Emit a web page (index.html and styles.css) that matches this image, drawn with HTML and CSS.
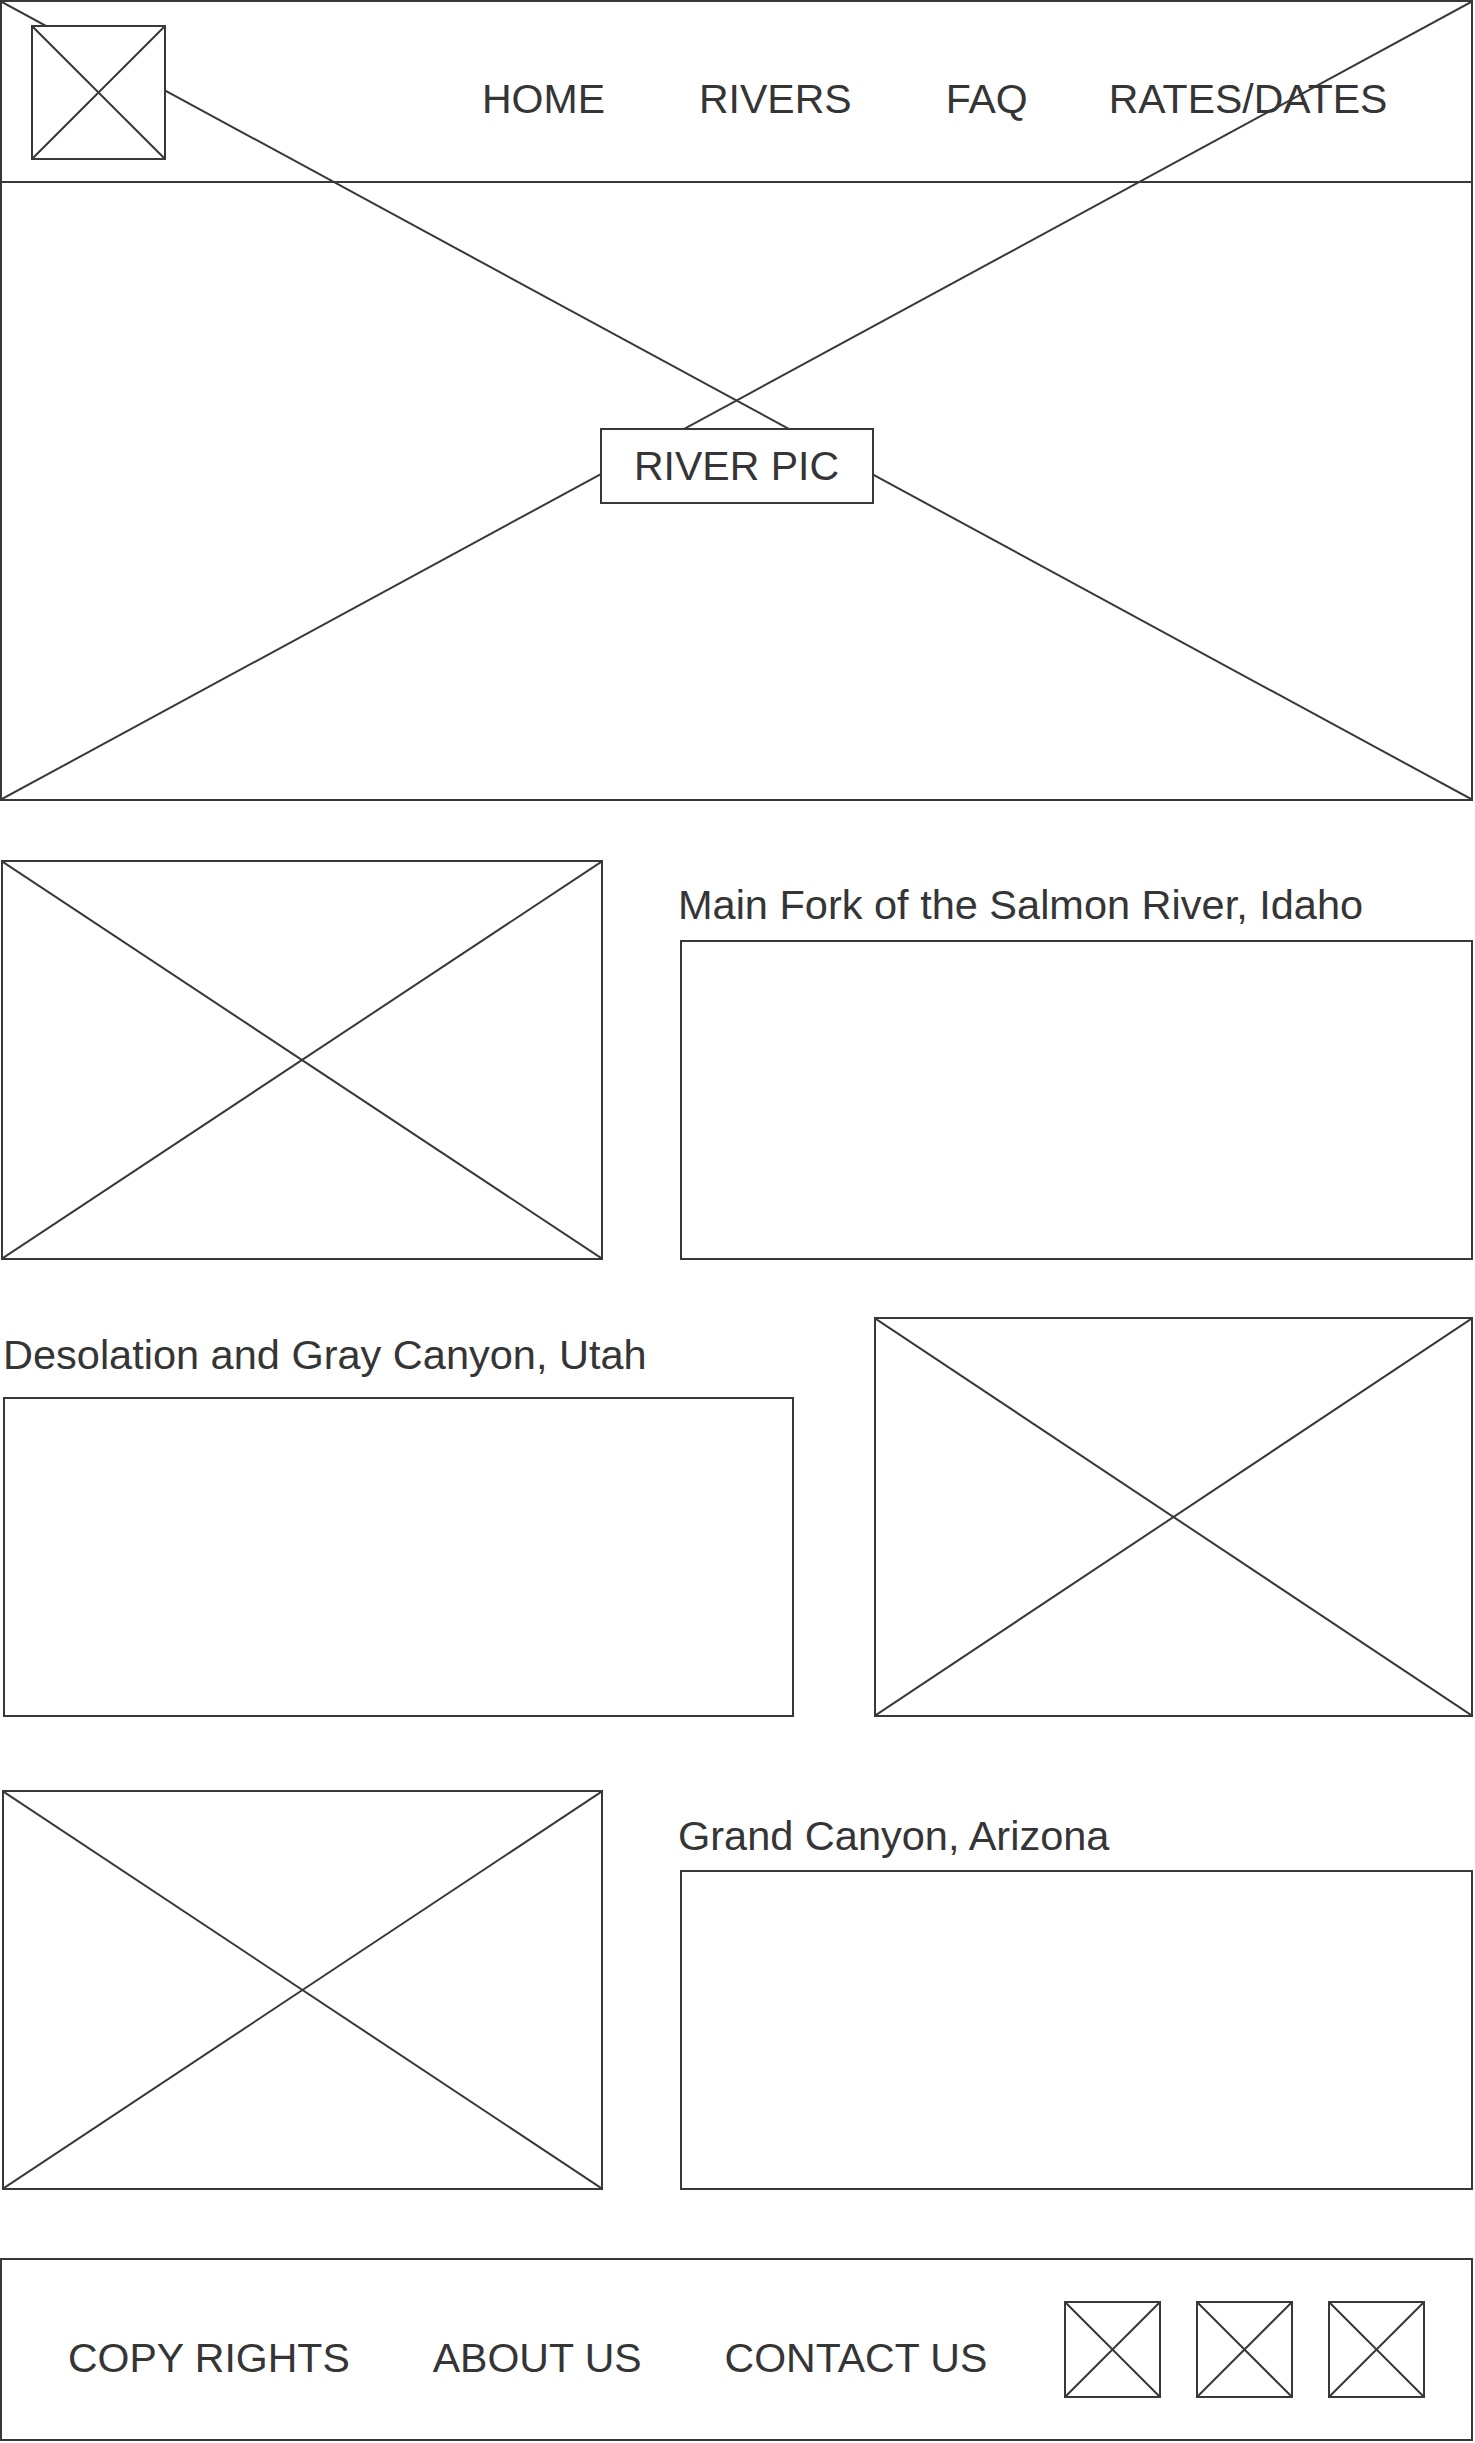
FILE: index.html
```html
<!DOCTYPE html>
<html lang="en">
<head>
<meta charset="utf-8">
<title>River Trips Wireframe</title>
<link rel="stylesheet" href="styles.css">
</head>
<body>
<div class="page">
  <section class="hero">
    <svg class="hero-x" viewBox="0 0 100 100" preserveAspectRatio="none" aria-hidden="true">
      <line x1="0" y1="0" x2="100" y2="100"/>
      <line x1="100" y1="0" x2="0" y2="100"/>
    </svg>
    <header class="topbar">
      <div class="logo ph">
        <svg class="x" viewBox="0 0 100 100" preserveAspectRatio="none"><line x1="0" y1="0" x2="100" y2="100"/><line x1="100" y1="0" x2="0" y2="100"/></svg>
      </div>
      <nav class="nav">
        <a href="#">HOME</a>
        <a href="#">RIVERS</a>
        <a href="#">FAQ</a>
        <a href="#" class="nav-last">RATES/DATES</a>
      </nav>
    </header>
    <div class="hero-body">
      <div class="hero-label">RIVER PIC</div>
    </div>
  </section>

  <section class="row row-1">
    <div class="ph pic">
      <svg class="x" viewBox="0 0 100 100" preserveAspectRatio="none"><line x1="0" y1="0" x2="100" y2="100"/><line x1="100" y1="0" x2="0" y2="100"/></svg>
    </div>
    <div class="text-col">
      <h2 class="title t1">Main Fork of the Salmon River, Idaho</h2>
      <div class="text-box"></div>
    </div>
  </section>

  <section class="row row-2">
    <div class="text-col">
      <h2 class="title t2">Desolation and Gray Canyon, Utah</h2>
      <div class="text-box"></div>
    </div>
    <div class="ph pic">
      <svg class="x" viewBox="0 0 100 100" preserveAspectRatio="none"><line x1="0" y1="0" x2="100" y2="100"/><line x1="100" y1="0" x2="0" y2="100"/></svg>
    </div>
  </section>

  <section class="row row-3">
    <div class="ph pic">
      <svg class="x" viewBox="0 0 100 100" preserveAspectRatio="none"><line x1="0" y1="0" x2="100" y2="100"/><line x1="100" y1="0" x2="0" y2="100"/></svg>
    </div>
    <div class="text-col">
      <h2 class="title t3">Grand Canyon, Arizona</h2>
      <div class="text-box"></div>
    </div>
  </section>

  <footer class="footer">
    <div class="footer-links">
      <a href="#">COPY RIGHTS</a>
      <a href="#">ABOUT US</a>
      <a href="#">CONTACT US</a>
    </div>
    <div class="socials">
      <div class="ph social"><svg class="x" viewBox="0 0 100 100" preserveAspectRatio="none"><line x1="0" y1="0" x2="100" y2="100"/><line x1="100" y1="0" x2="0" y2="100"/></svg></div>
      <div class="ph social"><svg class="x" viewBox="0 0 100 100" preserveAspectRatio="none"><line x1="0" y1="0" x2="100" y2="100"/><line x1="100" y1="0" x2="0" y2="100"/></svg></div>
      <div class="ph social"><svg class="x" viewBox="0 0 100 100" preserveAspectRatio="none"><line x1="0" y1="0" x2="100" y2="100"/><line x1="100" y1="0" x2="0" y2="100"/></svg></div>
    </div>
  </footer>
</div>
</body>
</html>
```

FILE: styles.css
```css
* { box-sizing: border-box; }

html, body {
  margin: 0;
  padding: 0;
  background: #ffffff;
}

body {
  font-family: "Liberation Sans", Arial, Helvetica, sans-serif;
  color: #353535;
}

.page {
  width: 1473px;
}

a {
  color: inherit;
  text-decoration: none;
}

/* generic placeholder box with an X */
.ph {
  border: 2px solid #383838;
  background: #ffffff;
}

.x {
  display: block;
  width: 100%;
  height: 100%;
}

.x line,
.hero-x line {
  stroke: #383838;
  stroke-width: 2;
  vector-effect: non-scaling-stroke;
}

/* hero */
.hero {
  position: relative;
  height: 801px;
  border: 2px solid #383838;
}

.hero-x {
  position: absolute;
  top: 0;
  left: 0;
  width: 100%;
  height: 100%;
}

.topbar {
  position: relative;
  height: 181px;
  border-bottom: 2px solid #383838;
  display: flex;
  align-items: flex-start;
}

.logo {
  width: 135px;
  height: 135px;
  margin-left: 29px;
  margin-top: 23px;
}

.nav {
  display: flex;
  gap: 94px;
  margin-left: 316px;
  margin-top: 74px;
  font-size: 41px;
  line-height: 47px;
}

.nav .nav-last {
  margin-left: -13px;
}

.hero-body {
  position: relative;
  display: flex;
  justify-content: center;
  padding-top: 245px;
}

.hero-label {
  width: 274px;
  height: 76px;
  border: 2px solid #383838;
  background: #ffffff;
  display: flex;
  align-items: center;
  justify-content: center;
  font-size: 41px;
  line-height: 47px;
}

/* river rows */
.row {
  display: grid;
  height: 400px;
}

.row-1 {
  margin-top: 59px;
  padding-left: 1px;
  grid-template-columns: 602px 1fr;
  column-gap: 77px;
}

.row-2 {
  margin-top: 57px;
  padding-left: 3px;
  grid-template-columns: 791px 1fr;
  column-gap: 80px;
}

.row-3 {
  margin-top: 73px;
  padding-left: 2px;
  grid-template-columns: 601px 1fr;
  column-gap: 77px;
}

.pic {
  height: 400px;
}

.text-col {
  display: flex;
  flex-direction: column;
  justify-content: flex-end;
}

.title {
  margin: 0 0 12px -2px;
  font-weight: normal;
  font-size: 41.5px;
  line-height: 47px;
  white-space: nowrap;
}

.t2 { margin-bottom: 19px; margin-left: 0; }
.t3 { margin-bottom: 11px; }

.text-box {
  height: 320px;
  border: 2px solid #383838;
}

/* footer */
.footer {
  margin-top: 68px;
  height: 183px;
  border: 2px solid #383838;
  display: flex;
  align-items: center;
  padding-left: 66px;
}

.footer-links {
  display: flex;
  gap: 83px;
  padding-top: 18px;
  font-size: 41px;
  line-height: 47px;
}

.socials {
  display: flex;
  gap: 35px;
  margin-left: 77px;
}

.social {
  width: 97px;
  height: 97px;
}
```
